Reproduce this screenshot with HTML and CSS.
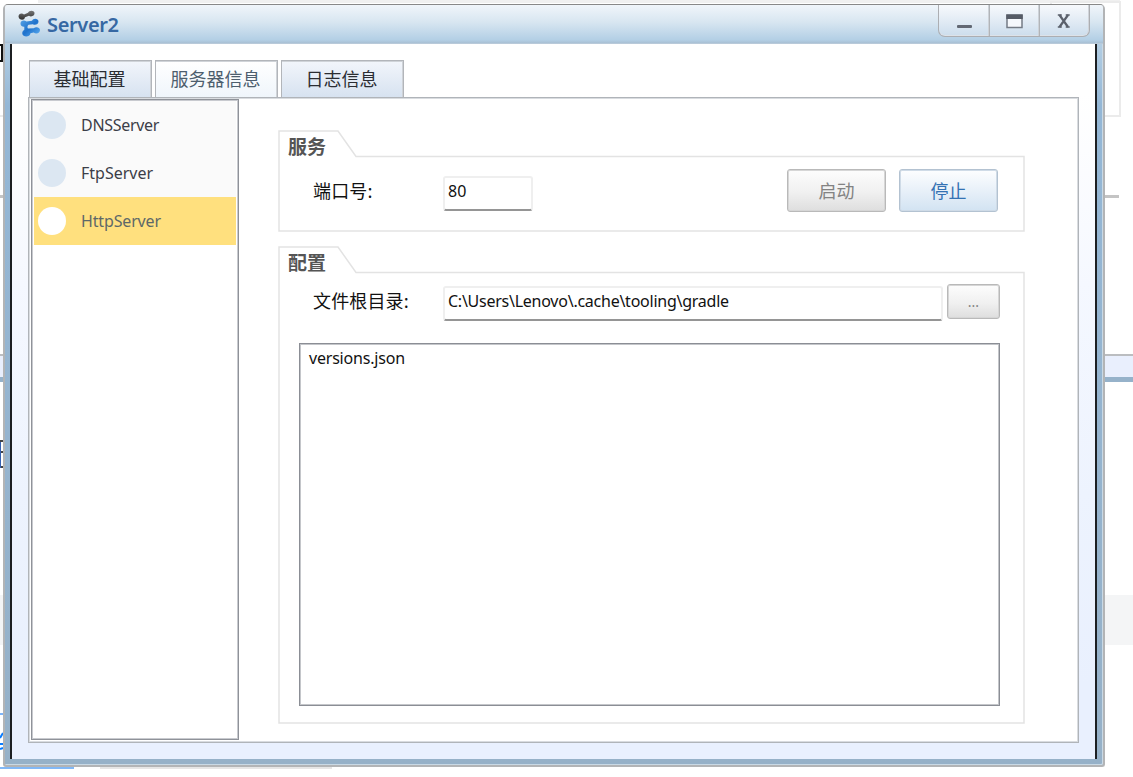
FILE: index.html
```
<!DOCTYPE html>
<html lang="zh-CN">
<head>
<meta charset="utf-8">
<title>Server2</title>
<link rel="stylesheet" href="styles.css">
</head>
<body>
<div class="desktop">
  <div class="bg bg-topline"></div>
  <div class="bg bg-frame"></div>
  <div class="bg bg-rule-a"></div>
  <div class="bg bg-rule-b"></div>
  <div class="bg bg-strip"></div>
  <div class="bg bg-band"></div>
  <div class="bg bg-blueline"></div>
  <div class="bg bg-bluebottom"></div>
  <div class="bg bg-graybottom"></div>
  <svg class="bg bg-marks" width="4" height="777" viewBox="0 0 4 777" fill="none">
    <path d="M0 45h2v16H0" stroke="#111" stroke-width="2"/>
    <path d="M0 441h3M0 452h3M0 467h3" stroke="#444" stroke-width="2"/>
    <path d="M0 442v26" stroke="#3560b0" stroke-width="2"/>
    <path d="M0 738l3-5M0 744h3M0 749l3-1" stroke="#087cff" stroke-width="2"/>
  </svg>

  <main class="window">
    <header class="titlebar">
      <svg class="logo" width="24" height="28" viewBox="0 0 24 28">
        <defs>
          <linearGradient id="blue" x1="0" y1="0" x2="1" y2="1">
            <stop offset="0" stop-color="#5aa5e6"/><stop offset=".5" stop-color="#1f72cc"/><stop offset="1" stop-color="#62b2f4"/>
          </linearGradient>
          <linearGradient id="dark" x1="0" y1="0" x2="0" y2="1">
            <stop offset="0" stop-color="#777"/><stop offset="1" stop-color="#2e2e2e"/>
          </linearGradient>
        </defs>
        <path d="M.500 6.500C.500 3.500 4 2.800 6 4.500l4-1.700C11 0 16 0 16.500 2.800 17 6 13 7.200 11 5.800L7 7.300C6.500 11 1 10.500.500 6.500z" fill="url(#dark)"/>
        <path d="M2.500 13.500c0-3 3.500-4 6-2l5.500-.8c1-3 6.500-2.600 6.500.8 0 3-3.500 4.200-5.600 2.700l-4.400.600c-1 1-1.500 2.700-.5 3.800l5.700-.300c2-2 6-1.300 6.300 1.500.300 3.500-4 4.700-6.300 2.700l-3.200.800c-.500 4.200-7.500 4.400-8.200.500-.300-2 .800-3.300 2-4L6.300 16.800C4.500 17 2.500 15.800 2.500 13.500z" fill="url(#blue)"/>
      </svg>
      <h1 class="title">Server2</h1>
      <div class="controls">
        <span class="control"><svg width="50" height="30"><rect x="18" y="20" width="15" height="3" rx="1" fill="#626873"/></svg></span>
        <span class="control"><svg width="50" height="30"><rect x="18" y="10" width="15" height="12.500" fill="#f5f8fc" stroke="#747b85" stroke-width="1.500"/><rect x="17.250" y="9.500" width="16.500" height="4.500" fill="#555b66"/></svg></span>
        <span class="control"><svg width="50" height="30" fill="none" stroke="#5a606b"><path d="M20.500 10l8.500 12M29 10l-8.500 12" stroke-width="2.200"/><path d="M18.800 10h4M26.700 10h4M18.800 22h4M26.700 22h4" stroke-width="1.500"/></svg></span>
      </div>
    </header>

    <div class="client">
      <nav class="tabs">
        <span class="tab">基础配置</span>
        <span class="tab tab-active">服务器信息</span>
        <span class="tab">日志信息</span>
      </nav>
      <section class="panel">
        <ul class="servers">
          <li class="server"><i class="dot"></i><span class="name name-dns">DNSServer</span></li>
          <li class="server"><i class="dot"></i><span class="name name-ftp">FtpServer</span></li>
          <li class="server server-active"><i class="dot"></i><span class="name name-http">HttpServer</span></li>
        </ul>
        <div class="settings">
          <section class="group group-service">
            <svg class="outline" width="747" height="102" fill="none" stroke="#e3e3e3" stroke-width="1.500"><path d="M1 1H60L78 26.500H746V101H1z"/></svg>
            <h2 class="legend">服务</h2>
            <div class="row row-port">
              <label class="label">端口号:</label>
              <span class="field field-port">80</span>
              <button class="btn btn-start">启动</button>
              <button class="btn btn-stop">停止</button>
            </div>
          </section>
          <section class="group group-config">
            <svg class="outline" width="747" height="478" fill="none" stroke="#e3e3e3" stroke-width="1.500"><path d="M1 1H60L78 26.500H746V477H1z"/></svg>
            <h2 class="legend">配置</h2>
            <div class="row row-path">
              <label class="label">文件根目录:</label>
              <span class="field field-path"><span class="path">C:\Users\Lenovo\.cache\tooling\gradle</span></span>
              <button class="btn btn-browse">...</button>
            </div>
            <div class="files"><span class="file">versions.json</span></div>
          </section>
        </div>
      </section>
    </div>
  </main>
</div>
</body>
</html>
```
FILE: styles.css
```
* { box-sizing: border-box; }
body { margin: 0; background: #fff; font-family: "Noto Sans", "Noto Sans CJK SC", sans-serif; color: #111; overflow: hidden; }
h1, h2, ul { margin: 0; padding: 0; font-weight: normal; list-style: none; }
.desktop { position: relative; width: 1133px; height: 777px; padding: 4px 0 0 3px; overflow: hidden; }

/* Fragments of the windows behind the dialog */
.bg { position: absolute; }
.bg-topline { left: 38px; top: 0; width: 1082px; height: 3px; background: #f0f0f0; }
.bg-frame { left: 1050px; top: 1px; width: 71px; height: 116px; border: 2px solid #ebebeb; }
.bg-rule-a { left: 0; top: 115px; width: 5px; height: 2px; background: #ebebeb; }
.bg-rule-b { left: 0; top: 195px; width: 1119px; height: 3px; background: #c4c4c4; }
.bg-strip { left: 0; top: 354px; width: 1133px; height: 28px; background: #e9effd; border-top: 2px solid #bbbdc0; border-bottom: 5px solid #96b2ca; }
.bg-band { left: 0; top: 595px; width: 1133px; height: 50px; background: #f4f5f6; }
.bg-blueline { left: 0; top: 713px; width: 5px; height: 2px; background: #7cb4f8; }
.bg-bluebottom { left: 0; top: 767px; width: 74px; height: 2px; background: #82b8f6; }
.bg-graybottom { left: 100px; top: 767px; width: 232px; height: 2px; background: #e6e6e6; }
.bg-marks { left: 0; top: 0; }

.window { position: relative; width: 1102px; height: 763px; padding: 0 6px 6px 5px; display: flex; flex-direction: column; border: 2px solid #b2b4b6; border-top: 1px solid #888; border-radius: 5px 5px 3px 3px; background: linear-gradient(#f0f5fa 0, #b4cfe4 36px, #94b7d6 100px, #96b1c8 100%); box-shadow: inset -1px -1px 0 #c9d9e5; }
.titlebar { height: 39px; flex: none; display: flex; align-items: flex-start; margin: 0 -6px 0 -5px; padding: 5px 13px 0 13px; background: linear-gradient(#f0f5fa 0, #d8e6f1 17px, #b3cfe5 35px, #a9c0d4 38px, #c8d3df 39px); border-radius: 3px 3px 0 0; }
.title { margin: 0 0 0 5px; font: 600 20px/29px "Noto Sans", sans-serif; letter-spacing: -0.350px; color: #3668a3; }
.controls { display: flex; margin: -5px 0 0 auto; height: 32px; border: 1px solid #acaeb2; border-top: 0; border-radius: 0 0 7px 7px; overflow: hidden; background: linear-gradient(#f7f9fc, #e0eaf4 55%, #ccddec); box-shadow: inset 0 -1px 0 #dde2e8, inset -1px 0 0 #d0d4da; }
.control { width: 50px; overflow: hidden; }
.control + .control { border-left: 1px solid #b1b4b8; box-shadow: -1px 0 0 #cdd2d8; }
.control svg { display: block; }
.control + .control svg { margin-left: -1px; }

.client { flex: 1; min-height: 0; padding: 16px; border: solid #1c1f22; border-width: 0 2px; background: linear-gradient(#fff 0, #fff 50px, #f5f8ff 240px, #edf3fe 450px, #e9f0fe 640px); display: flex; flex-direction: column; }
.tabs { display: flex; gap: 3px; height: 38px; flex: none; padding-left: 1px; }
.tab { width: 123px; border: 1px solid #b2b5ba; border-bottom: 0; background: linear-gradient(#f2f5fb, #d6e2f0); box-shadow: inset 0 1px 0 #cfd3d8, inset -1px 0 0 #cfd3d8; text-align: center; font: 18px/35px "Noto Sans CJK SC", sans-serif; color: #2b2d32; padding-right: 2px; }
.tab-active { background: linear-gradient(#fff, #eff5fb); color: #4d5e6e; }
.panel { flex: 1; min-height: 0; margin-top: -1px; border: 1px solid #b0b4b9; background: #fff; display: flex; padding: 1px 1px 2px 2px; box-shadow: inset 1px 1px 0 #d9dce0, inset -1px -1px 0 #d9dce0; }
.servers { width: 208px; border: 1px solid #8f9299; padding: 1px 2px 2px 2px; background: #fff; box-shadow: inset 1px 1px 0 #c8cacf, inset -1px -1px 0 #c8cacf; }
.server { height: 48px; padding-left: 4px; display: flex; align-items: center; background: #fafafa; }
.dot { width: 28px; height: 28px; flex: none; border-radius: 50%; background: #dce7f2; }
.name { margin-left: 15px; font-size: 16px; letter-spacing: -0.300px; color: #3c3e48; white-space: nowrap; }
.name-ftp { letter-spacing: 0; }
.name-http { letter-spacing: -0.150px; }
.server-active { background: #ffe07e; }
.server-active .dot { background: #fff; }
.server-active .name { color: #5e6868; }

.settings { padding: 31px 0 0 39px; display: flex; flex-direction: column; gap: 14px; }
.group { position: relative; width: 747px; }
.group-service { height: 102px; }
.group-config { height: 478px; }
.outline { position: absolute; left: 0; top: 0; }
.legend { height: 40px; padding: 2px 0 0 10px; font: bold 19px/28px "Noto Sans CJK SC", sans-serif; color: #555; }
.row { display: flex; padding-left: 34px; }
.label { width: 131px; padding-left: 1px; font: 18px/27px "Noto Sans CJK SC", sans-serif; letter-spacing: 0.150px; color: #111; white-space: nowrap; }
.field { height: 35px; padding-left: 3px; border: 2px solid #efefef; border-bottom: 2px solid #959595; border-radius: 3px; background: #fff; font-size: 16px; line-height: 27px; white-space: nowrap; }
.field-port { width: 90px; margin-top: 6px; }
.row-port .label { margin-top: 7px; }
.btn { padding: 0; border: 1px solid #b9b9b9; border-radius: 3px; background: linear-gradient(#fdfdfd, #f0f0f0 55%, #dedede); font: 18px/36px "Noto Sans CJK SC", sans-serif; color: #838383; text-align: center; box-shadow: inset 0 0 0 1px #d6d6d6; }
.btn-start { width: 99px; height: 43px; margin: -1px 0 0 254px; padding-bottom: 2px; }
.btn-stop { width: 99px; height: 43px; margin: -1px 0 0 13px; padding-bottom: 2px; border-color: #b3c2d1; background: linear-gradient(#fdfeff, #e6eff8 55%, #d2e3f2); color: #3472b3; box-shadow: inset 0 0 0 1px #cfdbe7; }
.row-path { height: 57px; }
.row-path .label { margin-top: 1px; }
.field-path { width: 500px; }
.path { letter-spacing: -0.250px; }
.btn-browse { width: 53px; height: 35px; margin-left: 4px; margin-top: -2px; font: 14px/34px "Noto Sans", sans-serif; }
.files { width: 701px; height: 363px; margin-left: 21px; padding: 2px 0 0 9px; border: 1px solid #8b8e95; font-size: 16px; line-height: 24px; letter-spacing: -0.200px; box-shadow: inset 1px 1px 0 #c4c6ca, inset -1px -1px 0 #c4c6ca; }
```
